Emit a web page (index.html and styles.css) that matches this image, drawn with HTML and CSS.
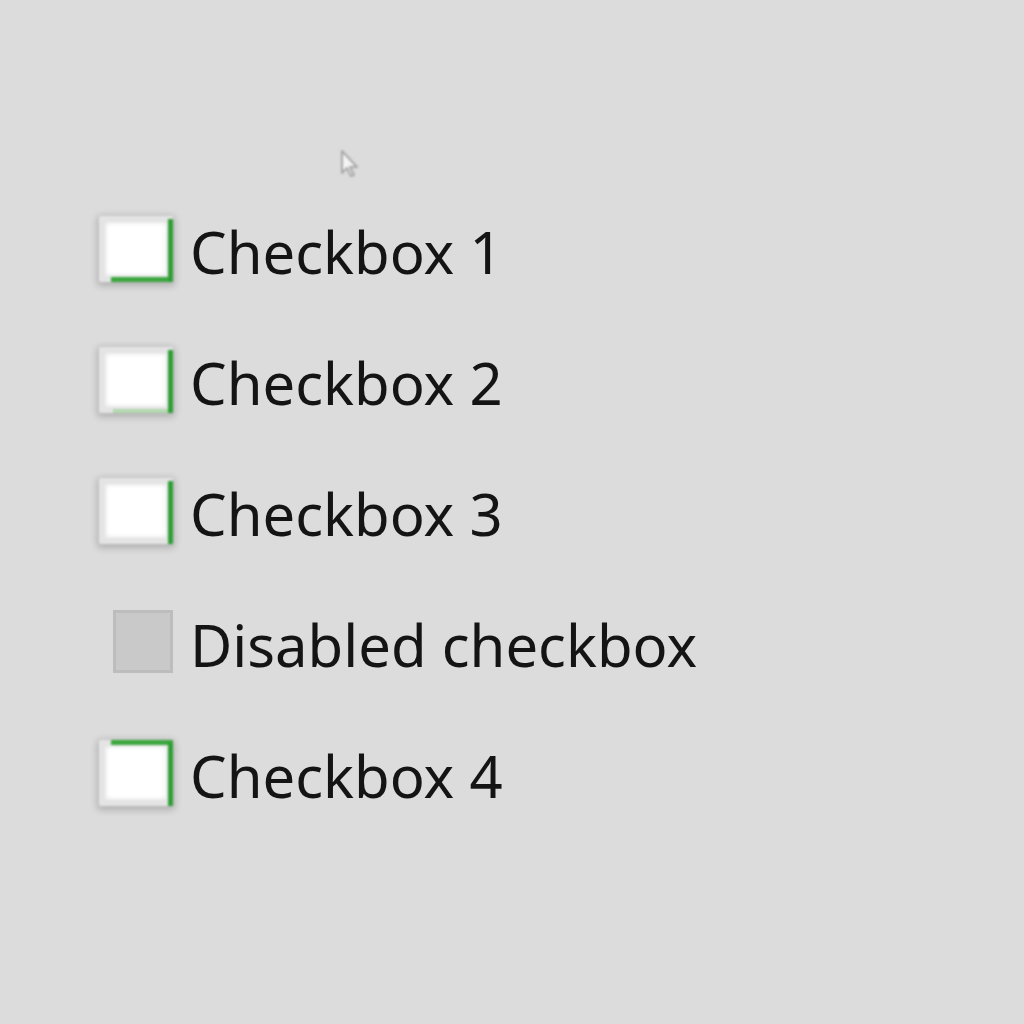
FILE: index.html
```html
<!DOCTYPE html>
<html>
<head>
<meta charset="utf-8">
<link rel="stylesheet" href="styles.css">
</head>
<body>
<div class="page">
  <svg class="cursor" width="24" height="30" viewBox="0 0 24 30"><path d="M3 2 L3 24 L8 19 L12 27 L15 26 L11 18 L18 18 Z" fill="#f4f4f4" stroke="#a8a8a8" stroke-width="2" stroke-linejoin="round"/></svg>
  <div class="list">
    <div class="row"><div class="slot"><div class="box g-right g-bottom"></div></div><span class="label">Checkbox 1</span></div>
    <div class="row"><div class="slot"><div class="box g-right g-bottom-faint"></div></div><span class="label">Checkbox 2</span></div>
    <div class="row"><div class="slot"><div class="box g-right"></div></div><span class="label">Checkbox 3</span></div>
    <div class="row"><div class="slot"><div class="box disabled"></div></div><span class="label">Disabled checkbox</span></div>
    <div class="row"><div class="slot"><div class="box g-right g-top"></div></div><span class="label">Checkbox 4</span></div>
  </div>
</div>
</body>
</html>
```

FILE: styles.css
```css
html, body {
  margin: 0;
  padding: 0;
  background: #dcdcdc;
}
.page {
  position: relative;
  width: 1024px;
  height: 1024px;
  overflow: hidden;
  background: #dcdcdc;
  font-family: "Noto Sans", "Open Sans", sans-serif;
}
.cursor {
  position: absolute;
  left: 339px;
  top: 149px;
  filter: blur(0.8px);
}
.list {
  display: flex;
  flex-direction: column;
  padding-top: 183px;
  padding-left: 97px;
}
.row {
  height: 131px;
  display: flex;
  align-items: center;
}
.slot {
  width: 76px;
  display: flex;
  justify-content: flex-end;
  margin-right: 17px;
}
.label {
  font-size: 58px;
  color: #141414;
  line-height: 1;
  padding-top: 6px;
}
.box {
  position: relative;
  width: 62px;
  height: 54px;
  background: #ffffff;
  border: 6px solid #e4e4e4;
  box-shadow: 0 2px 7px 2px rgba(0,0,0,0.2), inset 0 0 5px rgba(0,0,0,0.14);
  border-radius: 2px;
  filter: blur(1.2px);
}
.box.g-right::after {
  content: "";
  position: absolute;
  right: -6px;
  top: -3px;
  bottom: -6px;
  width: 5px;
  background: #2e9e34;
}
.box.g-bottom::before {
  content: "";
  position: absolute;
  left: 6px;
  right: -6px;
  bottom: -6px;
  height: 5px;
  background: #3aa63e;
}
.box.g-bottom-faint::before {
  content: "";
  position: absolute;
  left: 8px;
  right: -6px;
  bottom: -6px;
  height: 4px;
  background: #b3d8b0;
}
.box.g-top::before {
  content: "";
  position: absolute;
  left: 6px;
  right: -6px;
  top: -6px;
  height: 5px;
  background: #3aa63e;
}
.box.disabled {
  width: 54px;
  height: 57px;
  background: #c9c9c9;
  border: 3px solid #bdbdbd;
  box-shadow: none;
  border-radius: 0;
  filter: blur(0.6px);
}
```
